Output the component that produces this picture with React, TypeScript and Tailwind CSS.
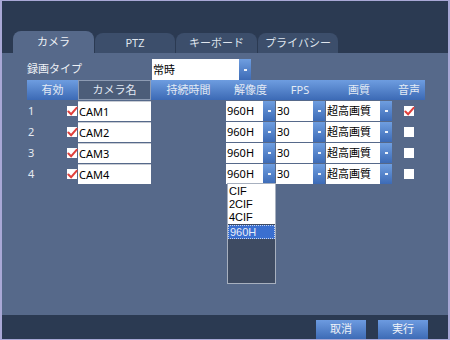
import React from "react";

const font = { fontFamily: '"Noto Sans", "Noto Sans CJK JP", sans-serif' };

const tabs = [
    { label: "カメラ", w: "w-[81px]", active: true },
    { label: "PTZ", w: "w-[80px]", active: false },
    { label: "キーボード", w: "w-[81px]", active: false },
    { label: "プライバシー", w: "w-[80px]", active: false },
];

const cams = [
    { id: 1, name: "CAM1", audio: true },
    { id: 2, name: "CAM2", audio: false },
    { id: 3, name: "CAM3", audio: false },
    { id: 4, name: "CAM4", audio: false },
];

const cols = "grid grid-cols-[51px_73px_75px_49px_50px_68px_32px]";

function Arrow() {
    return (
        <div className="w-[12px] h-full bg-gradient-to-b from-[#6f9ee0] to-[#3d6bb6] flex items-center justify-center">
            <div className="w-[3px] h-[2px] bg-white/90" />
        </div>
    );
}

function Select({ value, wide }: { value: string; wide: string }) {
    return (
        <div className="flex h-[20px]">
            <div className={`${wide} bg-white text-[11px] leading-[20px] text-black pl-[1px] truncate`}>{value}</div>
            <Arrow />
        </div>
    );
}

function Check({ on }: { on: boolean }) {
    return (
        <div className="relative w-[10px] h-[10px] bg-white">
            {on && (
                <svg viewBox="0 0 12 10" className="absolute left-[0px] top-[0px] w-[11px] h-[10px]">
                    <path d="M1.5 5.5 L4.5 8.5 L10.5 1.5" fill="none" stroke="#e0403c" strokeWidth="2.2" strokeLinecap="round" />
                </svg>
            )}
        </div>
    );
}

export default function App() {
    return (
        <div style={font} className="w-[450px] h-[340px] border-l-2 border-r-2 border-t border-b border-[#a9a8d6] flex flex-col bg-[#2b3a52]">
            {/* Tabs */}
            <div className="h-[52px] flex items-end pl-[11px] gap-[1px]">
                {tabs.map((t) => (
                    <div
                        key={t.label}
                        className={`${t.w} rounded-t-[8px] flex items-center justify-center text-[11px] ${t.active ? "h-[22px] bg-[#56698a] text-[#eef1f6]" : "h-[20px] bg-[#3c4e6b] text-[#dfe5ee]"}`}
                    >
                        {t.label}
                    </div>
                ))}
            </div>

            {/* Body */}
            <div className="relative flex-1 bg-[#56698a] pl-[25px] pt-[6px]">
                <div className="flex items-center h-[21px]">
                    <div className="w-[125px] text-[11px] text-[#eef1f6]">録画タイプ</div>
                    <div className="flex h-[21px]">
                        <div className="w-[87px] bg-white text-[11px] leading-[21px] text-black pl-[1px]">常時</div>
                        <Arrow />
                    </div>
                </div>

                {/* Header */}
                <div className={`${cols} h-[20px] w-[398px] text-[11px] text-[#e3eaf4] bg-gradient-to-b from-[#6e9de0] to-[#3c6ab5]`}>
                    <div className="flex items-center justify-center">有効</div>
                    <div className="flex items-center justify-center bg-[#4c5d79] border border-[#8d9bb3]">カメラ名</div>
                    <div className="flex items-center justify-center">持続時間</div>
                    <div className="flex items-center justify-center">解像度</div>
                    <div className="flex items-center justify-center">FPS</div>
                    <div className="flex items-center justify-center">画質</div>
                    <div className="flex items-center justify-center">音声</div>
                </div>

                {/* Rows */}
                <div className="flex flex-col gap-[1px] pt-[1px]">
                    {cams.map((c) => (
                        <div key={c.id} className={`${cols} h-[20px] w-[398px] items-center`}>
                            <div className="flex items-center justify-between pl-[1px] pr-[1px] text-[11px] text-[#e6ebf2]">
                                <span>{c.id}</span>
                                <Check on />
                            </div>
                            <div className="h-[20px] bg-white text-[11px] leading-[20px] text-black pl-[1px] border-t border-[#c8ccd4]">{c.name}</div>
                            <div />
                            <Select value="960H" wide="w-[37px]" />
                            <div className="pl-[1px]"><Select value="30" wide="w-[37px]" /></div>
                            <div className="pl-[1px]"><Select value="超高画質" wide="w-[54px]" /></div>
                            <div className="flex justify-center"><Check on={c.audio} /></div>
                        </div>
                    ))}
                </div>

                {/* Open resolution list */}
                <div className="absolute left-[225px] top-[130px] w-[49px] h-[101px] border border-[#a7b0bf] bg-[#3e4b62] flex flex-col font-['Liberation_Sans',sans-serif]">
                    <div className="bg-white text-[11px] leading-[13px] text-black pl-[1px] pt-[1px]">
                        <div>CIF</div>
                        <div>2CIF</div>
                        <div>4CIF</div>
                    </div>
                    <div className="mt-[1px] bg-[#3a6fd0] border border-dotted border-[#c9d6ef] text-[11px] leading-[12px] text-[#e8eefa] pl-[1px]">960H</div>
                </div>
            </div>

            {/* Footer */}
            <div className="h-[24px] flex items-end justify-end gap-[12px] pr-[20px]">
                <div className="w-[50px] h-[19px] bg-gradient-to-b from-[#6d9be0] to-[#3d6bb6] flex items-center justify-center text-[11px] text-[#eef2f8]">取消</div>
                <div className="w-[50px] h-[19px] bg-gradient-to-b from-[#6d9be0] to-[#3d6bb6] flex items-center justify-center text-[11px] text-[#eef2f8]">実行</div>
            </div>
        </div>
    );
}
